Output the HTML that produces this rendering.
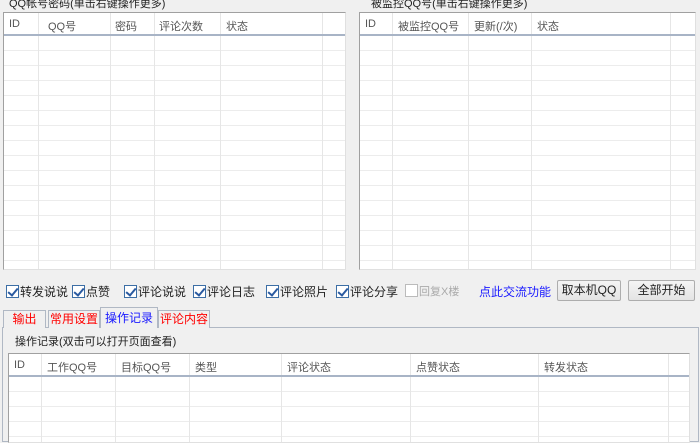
<!DOCTYPE html>
<html><head><meta charset="utf-8"><style>
*{margin:0;padding:0;box-sizing:border-box}
body{width:700px;height:436px;background:#f0f0f0;position:relative;overflow:hidden;font-family:"Liberation Sans","Noto Sans CJK SC","WenQuanYi Zen Hei",sans-serif;font-size:12px;color:#333}
.abs{position:absolute}
.list{position:absolute;background:#fff;border:1px solid #a0a0a0;border-right-color:#e0e0e0;border-bottom-color:#e0e0e0;overflow:hidden}
.hdr{position:absolute;left:0;right:0;top:0;height:23px;border-bottom:2px solid #a8b4c6;background:#fff}
.rows{position:absolute;left:0;right:0;top:23px;bottom:0;background:repeating-linear-gradient(to bottom,#fff 0,#fff 14px,#ececec 14px,#ececec 15px)}
.col{position:absolute;top:0;bottom:0;width:1px;background:#e6e6e6}
.hc{position:absolute;top:5px;font-size:11px;color:#555;white-space:nowrap}
.title{position:absolute;font-size:11px;color:#222;background:#f0f0f0;padding:0 2px}
.cb{position:absolute;top:283px;font-size:12px;color:#222;white-space:nowrap}
.cb i{display:inline-block;width:13px;height:13px;border:1px solid #3c6ea5;background:#fff;vertical-align:-2px;margin-right:1px;position:relative}
.cb i:after{content:"";position:absolute;left:3px;top:0px;width:4px;height:8px;border:solid #2a5aa0;border-width:0 2px 2px 0;transform:rotate(40deg)}
.cb.dis{color:#aaa}.cb.dis i{border-color:#bbb}.cb.dis i:after{display:none}
.btn{position:absolute;top:280px;height:21px;border:1px solid #adadad;border-radius:2px;background:linear-gradient(#f4f4f4,#e4e4e4);font-size:12px;text-align:center;line-height:19px;color:#222}
.tab{position:absolute;top:310px;height:18px;border:1px solid #b0b8c4;border-bottom:none;background:#f0f0f0;font-size:12px;color:#f00;text-align:center;line-height:17px}
</style></head><body>
<div class="title" style="left:7px;top:-5px">QQ帐号密码(单击右键操作更多)</div>
<div class="list" style="left:3px;top:12px;width:343px;height:258px">
 <div class="rows"></div>
 <div class="col" style="left:34px"></div><div class="col" style="left:106px"></div><div class="col" style="left:150px"></div><div class="col" style="left:216px"></div><div class="col" style="left:318px"></div>
 <div class="hdr"><div class="col" style="left:34px"></div><div class="col" style="left:106px"></div><div class="col" style="left:150px"></div><div class="col" style="left:216px"></div><div class="col" style="left:318px"></div>
 <span class="hc" style="left:5px">ID</span><span class="hc" style="left:44px">QQ号</span><span class="hc" style="left:111px">密码</span><span class="hc" style="left:155px">评论次数</span><span class="hc" style="left:222px">状态</span></div>
</div>
<div class="title" style="left:369px;top:-5px">被监控QQ号(单击右键操作更多)</div>
<div class="list" style="left:359px;top:12px;width:337px;height:258px">
 <div class="rows"></div>
 <div class="col" style="left:32px"></div><div class="col" style="left:108px"></div><div class="col" style="left:171px"></div><div class="col" style="left:310px"></div>
 <div class="hdr"><div class="col" style="left:32px"></div><div class="col" style="left:108px"></div><div class="col" style="left:171px"></div><div class="col" style="left:310px"></div>
 <span class="hc" style="left:5px">ID</span><span class="hc" style="left:38px">被监控QQ号</span><span class="hc" style="left:114px">更新(/次)</span><span class="hc" style="left:177px">状态</span></div>
</div>
<span class="cb" style="left:6px"><i></i>转发说说</span>
<span class="cb" style="left:72px"><i></i>点赞</span>
<span class="cb" style="left:124px"><i></i>评论说说</span>
<span class="cb" style="left:193px"><i></i>评论日志</span>
<span class="cb" style="left:266px"><i></i>评论照片</span>
<span class="cb" style="left:336px"><i></i>评论分享</span>
<span class="cb dis" style="left:405px;font-size:11px"><i></i>回复X楼</span>
<span class="abs" style="left:479px;top:283px;color:#1a1aff">点此交流功能</span>
<div class="btn" style="left:557px;width:64px">取本机QQ</div>
<div class="btn" style="left:628px;width:67px">全部开始</div>
<div class="abs" style="left:2px;top:327px;width:697px;height:115px;border:1px solid #b0b8c4;background:#f0f0f0"></div>
<div class="tab" style="left:3px;width:43px">输出</div>
<div class="tab" style="left:48px;width:52px">常用设置</div>
<div class="tab" style="left:100px;top:307px;height:21px;width:58px;color:#1a1aff;background:#f0f0f0;line-height:20px;z-index:2">操作记录</div>
<div class="tab" style="left:158px;width:52px">评论内容</div>
<div class="abs" style="left:15px;top:333px;color:#222;font-size:11px">操作记录(双击可以打开页面查看)</div>
<div class="list" style="left:8px;top:353px;width:682px;height:90px">
 <div class="rows"></div>
 <div class="col" style="left:32px"></div><div class="col" style="left:106px"></div><div class="col" style="left:180px"></div><div class="col" style="left:272px"></div><div class="col" style="left:401px"></div><div class="col" style="left:529px"></div><div class="col" style="left:659px"></div>
 <div class="hdr"><div class="col" style="left:32px"></div><div class="col" style="left:106px"></div><div class="col" style="left:180px"></div><div class="col" style="left:272px"></div><div class="col" style="left:401px"></div><div class="col" style="left:529px"></div><div class="col" style="left:659px"></div>
 <span class="hc" style="left:5px">ID</span><span class="hc" style="left:38px">工作QQ号</span><span class="hc" style="left:112px">目标QQ号</span><span class="hc" style="left:186px">类型</span><span class="hc" style="left:278px">评论状态</span><span class="hc" style="left:407px">点赞状态</span><span class="hc" style="left:535px">转发状态</span></div>
</div>
</body></html>
